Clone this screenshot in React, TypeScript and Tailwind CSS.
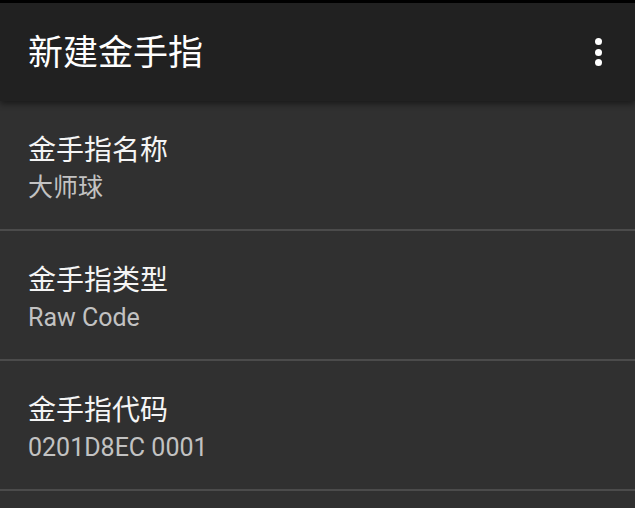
import React from 'react';

/* ─── Cheat fields ─── */
interface CheatField {
  id: string;
  label: string;
  value: string;
}

const fields: CheatField[] = [
  { id: 'name', label: '金手指名称', value: '大师球' },
  { id: 'type', label: '金手指类型', value: 'Raw Code' },
  { id: 'code', label: '金手指代码', value: '0201D8EC 0001' },
];

const font = "font-['Roboto','Noto_Sans_CJK_SC',sans-serif]";

function FieldRow({ field }: { field: CheatField }) {
  return (
    <div className="flex flex-col h-[130px] shrink-0 px-[28px] pt-[31px] border-b-2 border-[#4b4b4b]">
      <p className="text-[28px] leading-[38px] text-[#f5f5f5]">{field.label}</p>
      <p className="text-[25px] leading-[36px] text-[#c2c2c2]">{field.value}</p>
    </div>
  );
}

export default function App() {
  return (
    <div className={`w-[635px] h-[508px] overflow-hidden bg-[#303030] flex flex-col ${font}`}>
      <div className="h-[3px] bg-black shrink-0" />

      {/* Toolbar */}
      <div className="relative z-10 h-[98px] shrink-0 bg-[#212121] flex items-center justify-between pl-[28px] pr-[30px] pt-[3px] shadow-[0_3px_6px_rgba(0,0,0,0.45)]">
        <h1 className="text-[35px] leading-none text-white">新建金手指</h1>
        <button className="flex flex-col items-center gap-[3.5px] w-[14px] -mt-[3px]">
          <span className="w-[7px] h-[7px] rounded-full bg-white" />
          <span className="w-[7px] h-[7px] rounded-full bg-white" />
          <span className="w-[7px] h-[7px] rounded-full bg-white" />
        </button>
      </div>

      {/* Fields */}
      <div className="flex flex-col">
        {fields.map((f) => (
          <FieldRow key={f.id} field={f} />
        ))}
      </div>
    </div>
  );
}
